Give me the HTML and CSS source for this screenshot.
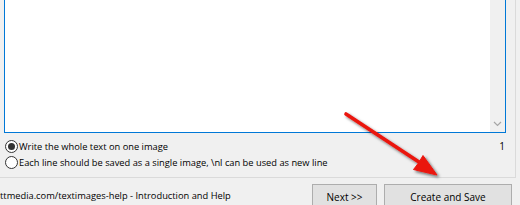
FILE: index.html
```html
<!DOCTYPE html>
<html lang="en">
<head>
	<meta charset="UTF-8">
	<title>Text images</title>
	<link rel="stylesheet" href="styles.css">
</head>
<body>
	<div class="panel">
		<div class="editor">
			<div class="text-area"></div>
			<div class="vscroll">
				<svg class="chev" width="9" height="6" viewBox="0 0 9 6"><path d="M1 1 L4.5 4.5 L8 1" fill="none" stroke="#a6a6a6" stroke-width="1.2"/></svg>
			</div>
		</div>
		<div class="options">
			<label class="opt">
				<span class="radio checked"></span>
				<span>Write the whole text on one image</span>
				<span class="count">1</span>
			</label>
			<label class="opt">
				<span class="radio"></span>
				<span>Each line should be saved as a single image, \nl can be used as new line</span>
			</label>
		</div>
	</div>
	<div class="bottom">
		<span class="help">ttmedia.com/textimages-help - Introduction and Help</span>
		<button class="btn next">Next &gt;&gt;</button>
		<button class="btn save">Create and Save</button>
	</div>
	<!-- annotation arrow over the dialog -->
	<svg class="arrow" width="520" height="205" viewBox="0 0 520 205">
		<defs>
			<filter id="shadow" x="-20%" y="-20%" width="140%" height="140%">
				<feDropShadow dx="2" dy="2" stdDeviation="1.6" flood-color="#000" flood-opacity="0.55"/>
			</filter>
		</defs>
		<g filter="url(#shadow)" fill="#ea1410" stroke="#ea1410">
			<line x1="346" y1="114" x2="422" y2="164" stroke-width="3.6" stroke-linecap="round"/>
			<polygon points="437,175 413.5,169.5 418.5,163 423,155.5" stroke-width="1" stroke-linejoin="round"/>
		</g>
	</svg>
</body>
</html>
```

FILE: styles.css
```css
	body{
		margin: 0;
		width: 520px;
		height: 205px;
		overflow: hidden;
		position: relative;
		background: #f0f0f0;
		font-family: "Open Sans", "Noto Sans", sans-serif;
		font-size: 9.3px;
		color: #000;
	}
	.panel{
		width: 515px;
		height: 178px;
		border-right: 1px solid #dadada;
		border-bottom: 1px solid #dadada;
	}
	/*textarea, top edge is out of view*/
	.editor{
		display: flex;
		width: 502px;
		height: 134px;
		margin: -1px 0 0 4px;
		box-sizing: border-box;
		border: 1px solid #0078d7;
		background: #fff;
	}
	.text-area{
		flex: 1;
	}
	.vscroll{
		width: 15px;
		background: #f0f0f0;
		display: flex;
		flex-direction: column;
		justify-content: flex-end;
		align-items: center;
		padding-bottom: 5px;
	}
	.options{
		padding-top: 5px;
	}
	.opt{
		display: flex;
		align-items: center;
		height: 16px;
		padding-left: 5px;
	}
	.radio{
		width: 13px;
		height: 13px;
		box-sizing: border-box;
		border: 1px solid #333;
		border-radius: 50%;
		background: #fff;
		margin-right: 1px;
		display: flex;
		align-items: center;
		justify-content: center;
	}
	.radio.checked::after{
		content: "";
		width: 7px;
		height: 7px;
		border-radius: 50%;
		background: #333;
	}
	.count{
		margin-left: auto;
		margin-right: 10px;
		font-size: 10px;
	}
	.bottom{
		display: flex;
		align-items: flex-start;
		padding-top: 6px;
	}
	.help{
		line-height: 24px;
	}
	.btn{
		height: 23px;
		padding: 2px 0 0;
		font: inherit;
		font-size: 10px;
		color: #000;
		background: #e1e1e1;
		border: 1px solid #adadad;
	}
	.next{
		width: 65px;
		margin-left: auto;
	}
	.save{
		width: 128px;
		margin: 0 8px 0 7px;
	}
	.arrow{
		position: absolute;
		left: 0;
		top: 0;
		pointer-events: none;
	}
```
